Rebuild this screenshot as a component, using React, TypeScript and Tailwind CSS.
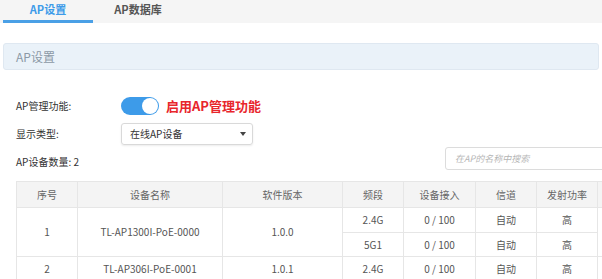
import React from "react";

const font = { fontFamily: '"Noto Sans CJK SC", "Noto Sans", sans-serif' };

function Toggle() {
  return (
    <div className="relative w-[38px] h-[18px] rounded-full bg-[#3d9be9] shrink-0">
      <div className="absolute right-[1px] top-[1px] w-[16px] h-[16px] rounded-full bg-white" />
    </div>
  );
}

const cell = "border border-[#e6e6e6] text-center align-middle p-0";

export default function App() {
  return (
    <div style={font} className="w-[602px] h-[279px] overflow-hidden bg-white text-[#333]">
      {/* tabs */}
      <div className="h-[23px] bg-[#f5f5f5] flex pl-[3px]">
        <div className="w-[90px] h-[23px] border-b-[3px] border-[#4aa0e6] flex items-center justify-center text-[11px] font-bold text-[#3d9be9] leading-none pb-[2px]">
          AP设置
        </div>
        <div className="w-[90px] h-[23px] flex items-center justify-center text-[11px] font-bold text-[#555] leading-none pb-[5px]">
          AP数据库
        </div>
      </div>

      {/* panel header */}
      <div className="mt-[20px] mx-[3px] h-[27px] bg-[#eaf2f9] border border-[#dfe8f1] rounded-[3px] flex items-center pl-[12px] text-[12px] text-[#8c99a6] leading-none">
        AP设置
      </div>

      {/* form */}
      <div className="pl-[16px] mt-[27px] flex items-center h-[18px]">
        <div className="w-[105px] shrink-0 text-[10px] leading-none">AP管理功能:</div>
        <Toggle />
        <div className="ml-[7px] text-[13px] font-bold text-[#e8262c] leading-none pb-[1px]">启用AP管理功能</div>
      </div>

      <div className="pl-[16px] mt-[8px] flex items-center h-[22px]">
        <div className="w-[105px] shrink-0 text-[10px] leading-none">显示类型:</div>
        <div className="w-[132px] shrink-0 h-[22px] border border-[#d9d9d9] rounded-[3px] shadow-[0_1px_2px_rgba(0,0,0,0.08)] flex items-center justify-between pl-[8px] pr-[6px]">
          <span className="text-[10px] leading-none">在线AP设备</span>
          <span className="w-0 h-0 border-l-[3px] border-r-[3px] border-t-[4px] border-l-transparent border-r-transparent border-t-[#444]" />
        </div>
      </div>

      <div className="pl-[16px] mt-[2px] flex items-start h-[34px]">
        <div className="w-[429px] shrink-0 text-[10px] leading-none pt-[10px]">AP设备数量: 2</div>
        <div className="w-[170px] shrink-0 h-[23px] border border-[#dcdcdc] rounded-[3px] flex items-center pl-[9px] text-[9px] italic text-[#b5b5b5] leading-none">
          在AP的名称中搜索
        </div>
      </div>

      {/* table */}
      <div className="pl-[16px]">
        <table className="border-collapse table-fixed w-[650px] text-[10px] leading-none">
          <colgroup>
            <col className="w-[61px]" />
            <col className="w-[145px]" />
            <col className="w-[120px]" />
            <col className="w-[61px]" />
            <col className="w-[72px]" />
            <col className="w-[61px]" />
            <col className="w-[61px]" />
            <col className="w-[69px]" />
          </colgroup>
          <thead>
            <tr className="h-[26px] bg-[#f4f4f4] text-[#666]">
              <th className={`${cell} font-normal`}>序号</th>
              <th className={`${cell} font-normal`}>设备名称</th>
              <th className={`${cell} font-normal`}>软件版本</th>
              <th className={`${cell} font-normal`}>频段</th>
              <th className={`${cell} font-normal`}>设备接入</th>
              <th className={`${cell} font-normal`}>信道</th>
              <th className={`${cell} font-normal`}>发射功率</th>
              <th className={`${cell} font-normal`}></th>
            </tr>
          </thead>
          <tbody className="text-[#555]">
            <tr className="h-[25px]">
              <td rowSpan={2} className={cell}>1</td>
              <td rowSpan={2} className={cell}>TL-AP1300I-PoE-0000</td>
              <td rowSpan={2} className={cell}>1.0.0</td>
              <td className={cell}>2.4G</td>
              <td className={cell}>0 / 100</td>
              <td className={cell}>自动</td>
              <td className={cell}>高</td>
              <td rowSpan={2} className={cell}></td>
            </tr>
            <tr className="h-[24px]">
              <td className={cell}>5G1</td>
              <td className={cell}>0 / 100</td>
              <td className={cell}>自动</td>
              <td className={cell}>高</td>
            </tr>
            <tr className="h-[25px]">
              <td className={cell}>2</td>
              <td className={cell}>TL-AP306I-PoE-0001</td>
              <td className={cell}>1.0.1</td>
              <td className={cell}>2.4G</td>
              <td className={cell}>0 / 100</td>
              <td className={cell}>自动</td>
              <td className={cell}>高</td>
              <td className={cell}></td>
            </tr>
          </tbody>
        </table>
      </div>
    </div>
  );
}
